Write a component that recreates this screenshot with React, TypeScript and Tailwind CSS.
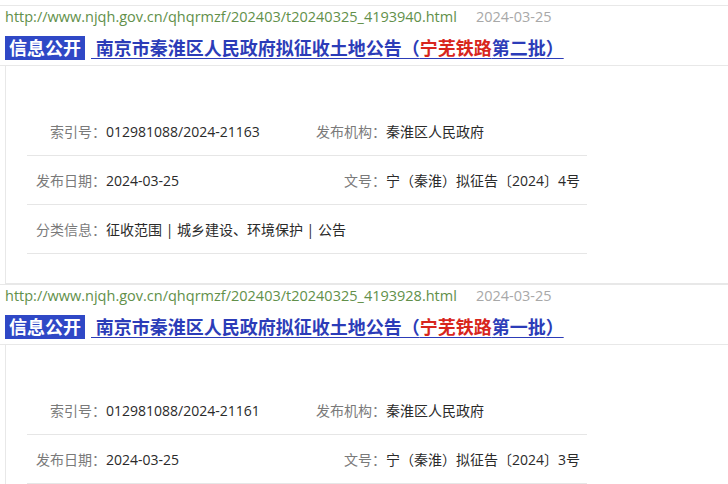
import React from "react";

type Row = { label: string; value: string; label2?: string; value2?: string };

type Record = {
  url: string;
  date: string;
  batch: string;
  rows: Row[];
};

const records: Record[] = [
  {
    url: "http://www.njqh.gov.cn/qhqrmzf/202403/t20240325_4193940.html",
    date: "2024-03-25",
    batch: "第二批",
    rows: [
      { label: "索引号：", value: "012981088/2024-21163", label2: "发布机构：", value2: "秦淮区人民政府" },
      { label: "发布日期：", value: "2024-03-25", label2: "文号：", value2: "宁（秦淮）拟征告〔2024〕4号" },
      { label: "分类信息：", value: "征收范围 | 城乡建设、环境保护 | 公告" },
    ],
  },
  {
    url: "http://www.njqh.gov.cn/qhqrmzf/202403/t20240325_4193928.html",
    date: "2024-03-25",
    batch: "第一批",
    // the third row falls below the visible area
    rows: [
      { label: "索引号：", value: "012981088/2024-21161", label2: "发布机构：", value2: "秦淮区人民政府" },
      { label: "发布日期：", value: "2024-03-25", label2: "文号：", value2: "宁（秦淮）拟征告〔2024〕3号" },
    ],
  },
];

const font = "font-['Open_Sans','Noto_Sans_CJK_SC',sans-serif]";

const InfoRow = ({ row }: { row: Row }) => (
  <div className="grid h-[49px] grid-cols-[79px_210px_70px_1fr] items-center border-b border-[#e6e6e6] text-[14px]">
    <span className="text-right text-[#7a7a7a]">{row.label}</span>
    {row.label2 ? (
      <>
        <span className="text-[#2a2a2a]">{row.value}</span>
        <span className="whitespace-nowrap text-right text-[#7a7a7a]">{row.label2}</span>
        <span className="text-[#2a2a2a]">{row.value2}</span>
      </>
    ) : (
      <span className="col-span-3 text-[#2a2a2a]">{row.value}</span>
    )}
  </div>
);

const RecordBlock = ({ rec }: { rec: Record }) => (
  <div className="border-t border-[#e8e8e8]">
    <div className="flex h-[22px] items-center pl-[5px] text-[14.5px] leading-[22px]">
      <span className="text-[#62904a]">{rec.url}</span>
      <span className="ml-[19px] text-[#a8a8a8]">{rec.date}</span>
    </div>
    <div className="flex items-center border-b border-[#e8e8e8] pb-[5px] pl-[5px] pt-[8px]">
      <span className="flex h-[24px] items-center bg-[#2f48c6] px-[4px] text-[18px] font-bold leading-none text-white">
        信息公开
      </span>
      <a
        href="#"
        className="ml-[6px] whitespace-pre text-[18px] font-bold leading-[24px] text-[#2c3cb8] underline decoration-[#2c3cb8] underline-offset-[3px]"
      >
        {" 南京市秦淮区人民政府拟征收土地公告（"}
        <span className="text-[#d8261d]">宁芜铁路</span>
        {rec.batch}）
      </a>
    </div>
    <div className="ml-[5px] h-[218px] border-b border-l border-[#e8e8e8] pt-[41px]">
      <div className="ml-[21px] w-[560px]">
        {rec.rows.map((r) => (
          <InfoRow key={r.label} row={r} />
        ))}
      </div>
    </div>
  </div>
);

export default function App() {
  return (
    <div className={`h-[484px] w-[728px] overflow-hidden bg-white pt-[5px] ${font}`}>
      {records.map((r) => (
        <RecordBlock key={r.url} rec={r} />
      ))}
    </div>
  );
}
